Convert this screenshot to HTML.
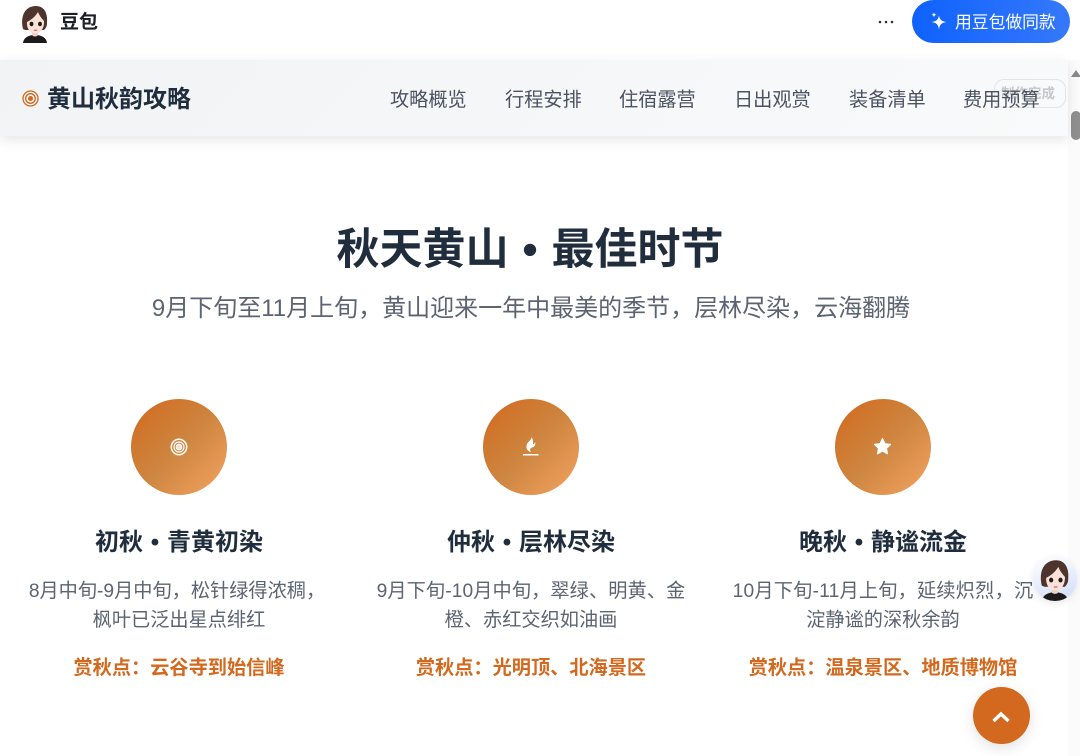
<!DOCTYPE html>
<html lang="zh">
<head>
<meta charset="utf-8">
<style>
html,body{margin:0;padding:0;background:#fff}
body{width:1080px;height:756px;overflow:hidden;position:relative;font-family:"Liberation Sans","Noto Sans CJK SC",sans-serif;color:#1f2d3d}
.a{position:absolute;white-space:nowrap}
.c{text-align:center}
.g{display:inline-block;width:1em;text-align:center}
.nav{left:0;top:60px;width:1068px;height:76px;background:linear-gradient(135deg,#f1f3f5,#f9fafb);box-shadow:0 4px 12px rgba(0,0,0,.1)}
.sb{left:1068px;top:60px;width:12px;height:696px;background:#fbfbfb}
.n{top:87px;font-size:19.2px;line-height:28px;color:#4a5361}
.circle{top:399px;width:96px;height:96px;border-radius:50%;background:linear-gradient(135deg,#d2691e,#cd853f 50%,#f4a460)}
.t{top:525px;font-size:24px;line-height:36px;font-weight:700;color:#1f2d3d;width:400px}
.d{font-size:19.2px;line-height:29px;color:#5c6472;width:340px}
.h{top:654px;font-size:19.2px;line-height:29px;font-weight:700;color:#d2691e;width:360px}
</style>
</head>
<body>
<svg width="0" height="0" style="position:absolute">
<defs>
<symbol id="face" viewBox="0 0 40 40">
<path d="M8 40c.5-5 5-8 12-8s11.500 3 12 8z" fill="#1d1a1b"/>
<path d="M17 27h6v5c-1 2-5 2-6 0z" fill="#f4cdbf"/>
<path d="M8 26C5 13 10 3 21 3c8 0 12 7 11 17 0 3-1 5-3 7H11c-1 0-2-.5-3-1z" fill="#4d342c"/>
<path d="M12 19c4-2 8-5 11-10 1 3 4 7 6 9 .5 7-3.500 12.500-8.500 12.500S11.500 26 12 19z" fill="#fbe2d8"/>
<ellipse cx="16.500" cy="21" rx="1.900" ry="2.200" fill="#231a1a"/>
<ellipse cx="25" cy="21" rx="1.900" ry="2.200" fill="#231a1a"/>
<path d="M19 27q1.600.8 3.200 0" stroke="#d9626a" stroke-width="1.200" fill="none"/>
</symbol>
</defs>
</svg>

<svg class="a" style="left:15px;top:3px" width="40" height="40"><use href="#face"/></svg>
<div class="a" style="left:60px;top:8px;font-size:19px;line-height:29px;font-weight:700;color:#1c1f26">豆包</div>
<div class="a" style="left:878px;top:8px;font-size:16px;line-height:24px;color:#222">
<svg width="16" height="24"><circle cx="2" cy="14" r="1.300" fill="#333"/><circle cx="8" cy="14" r="1.300" fill="#333"/><circle cx="14" cy="14" r="1.300" fill="#333"/></svg>
</div>
<div class="a" style="left:912px;top:0;width:158px;height:43px;border-radius:22px;background:linear-gradient(90deg,#0f62fe,#3578fa)"></div>
<svg class="a" style="left:929px;top:11px" width="20" height="20" viewBox="0 0 20 20"><path d="M10 4.500c.6 4 2.400 5.900 7.500 6.500-5 .7-6.900 2.500-7.500 7.500-.7-5-2.500-6.800-7.500-7.500 5-.6 6.900-2.500 7.500-6.500z" fill="#fff"/><path d="M5 1c.2 1.800 1 2.500 2.700 2.700C6 3.900 5.200 4.700 5 6.400 4.800 4.700 4 3.900 2.300 3.700 4 3.500 4.800 2.800 5 1z" fill="#fff"/></svg>
<div class="a" style="left:955px;top:8px;font-size:16.800px;line-height:29px;color:#fff">用豆包做同款</div>

<div class="a sb"></div>
<div class="a" style="left:1071px;top:70px;width:0;height:0;border-left:5px solid transparent;border-right:5px solid transparent;border-bottom:7px solid #8a8a8a"></div>
<div class="a" style="left:1071px;top:111px;width:10px;height:29px;border-radius:5px;background:#8f8f8f"></div>

<div class="a nav"></div>
<svg class="a" style="left:22px;top:90px" width="17" height="17" viewBox="0 0 17 17"><circle cx="8.500" cy="8.500" r="7.500" fill="none" stroke="#d2691e" stroke-width="1.300"/><circle cx="8.500" cy="8.500" r="4.800" fill="none" stroke="#d2691e" stroke-width="1.300"/><circle cx="8.500" cy="8.500" r="2.500" fill="#d2691e"/></svg>
<div class="a" style="left:47px;top:82px;font-size:24px;line-height:36px;font-weight:700;color:#1f2d3d">黄山秋韵攻略</div>
<div class="a" style="left:994px;top:79px;width:70px;height:27px;border:1px solid #e2e4e7;border-radius:10px;font-size:13.500px;line-height:28px;font-weight:700;color:#c6c8cb;text-align:right"><span style="margin-right:10px">制作完成</span></div>
<div class="a n" style="left:390px">攻略概览</div>
<div class="a n" style="left:505px">行程安排</div>
<div class="a n" style="left:619px">住宿露营</div>
<div class="a n" style="left:734px">日出观赏</div>
<div class="a n" style="left:849px">装备清单</div>
<div class="a n" style="left:963px">费用预算</div>

<div class="a c" style="left:130px;top:218px;width:800px;font-size:43px;line-height:64px;font-weight:700;color:#1f2d3d">秋天黄山<span class="g">•</span>最佳时节</div>
<div class="a c" style="left:31px;top:291px;width:1000px;font-size:24px;line-height:36px;color:#5c6472">9月下旬至11月上旬，黄山迎来一年中最美的季节，层林尽染，云海翻腾</div>

<div class="a circle" style="left:131px"></div>
<div class="a circle" style="left:483px"></div>
<div class="a circle" style="left:835px"></div>

<svg class="a" style="left:170px;top:438px" width="18" height="18" viewBox="0 0 18 18"><circle cx="9" cy="9" r="7.700" fill="none" stroke="#fff" stroke-width="1.500"/><circle cx="9" cy="9" r="5" fill="none" stroke="#fff" stroke-width="1.200"/><circle cx="9" cy="9" r="2.800" fill="#fff" fill-opacity=".75" stroke="#fff" stroke-width="1.100"/></svg>
<svg class="a" style="left:522px;top:436px" width="18" height="22" viewBox="0 0 18 22"><path d="M9.500 1C10 4 5 5.500 4.500 10 4.200 13 6 15.500 9 16 7.500 14 8 12 10 11.500 12.500 11 14 9 13 6 12.500 8 11.500 8.500 10.800 8 11.500 6 11 3 9.500 1z" fill="#fff"/><rect x="1" y="18" width="15.500" height="1.500" fill="#fff"/></svg>
<svg class="a" style="left:873px;top:437px" width="19" height="18" viewBox="0 0 19 18"><path d="M9.500 1.500l2.400 5.200 5.600.7-4.100 3.900 1.100 5.500-5-2.800-5 2.800 1.100-5.500-4.100-3.900 5.600-.7z" fill="#fff" stroke="#fff" stroke-width="1.200" stroke-linejoin="round"/></svg>

<div class="a t c" style="left:-21px">初秋<span class="g">•</span>青黄初染</div>
<div class="a t c" style="left:331px">仲秋<span class="g">•</span>层林尽染</div>
<div class="a t c" style="left:683px">晚秋<span class="g">•</span>静谧流金</div>

<div class="a d c" style="left:7px;top:577px">8月中旬-9月中旬，松针绿得浓稠，</div>
<div class="a d c" style="left:9px;top:606px">枫叶已泛出星点绯红</div>
<div class="a d c" style="left:361px;top:577px;letter-spacing:.1px">9月下旬-10月中旬，翠绿、明黄、金</div>
<div class="a d c" style="left:361px;top:606px">橙、赤红交织如油画</div>
<div class="a d c" style="left:713px;top:577px;letter-spacing:.2px">10月下旬-11月上旬，延续炽烈，沉</div>
<div class="a d c" style="left:713px;top:606px">淀静谧的深秋余韵</div>

<div class="a h c" style="left:-1px">赏秋点：云谷寺到始信峰</div>
<div class="a h c" style="left:351px">赏秋点：光明顶、北海景区</div>
<div class="a h c" style="left:703px">赏秋点：温泉景区、地质博物馆</div>

<div class="a" style="left:1033px;top:557px;width:44px;height:44px;border-radius:50%;background:linear-gradient(160deg,#fff,#cfdcfb);box-shadow:0 2px 8px rgba(0,0,0,.1);overflow:hidden">
<svg width="44" height="44" style="display:block"><use href="#face"/></svg>
</div>

<div class="a" style="left:973px;top:687px;width:57px;height:57px;border-radius:50%;background:#d2691e;box-shadow:0 4px 14px rgba(0,0,0,.12)"></div>
<svg class="a" style="left:991px;top:710px" width="20" height="14" viewBox="0 0 20 14"><path d="M2.500 11L10 4l7.500 7" fill="none" stroke="#fff" stroke-width="3.400"/></svg>
</body>
</html>
